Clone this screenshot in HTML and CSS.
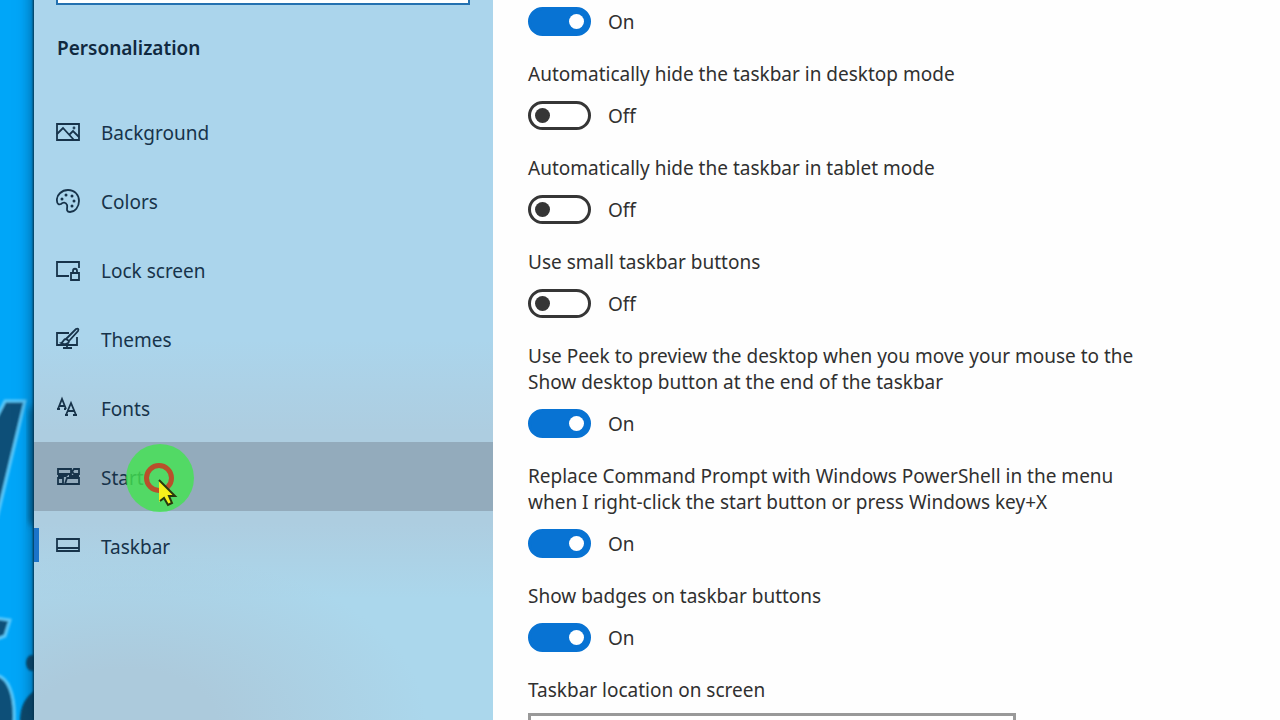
FILE: index.html
```html
<!DOCTYPE html>
<html lang="en">
<head>
    <meta charset="UTF-8">
    <meta name="viewport" content="width=device-width, initial-scale=1.0">
    <title>Settings</title>
    <link rel="stylesheet" href="styles.css">
</head>
<body>
    <div class="desktop">
        <svg class="wallpaper" viewBox="0 0 34 720" preserveAspectRatio="xMinYMin slice" aria-hidden="true">
            <defs>
                <filter id="soft" x="-50%" y="-50%" width="200%" height="200%">
                    <feGaussianBlur stdDeviation="1"/>
                </filter>
                <filter id="shade" x="-100%" y="-50%" width="300%" height="200%">
                    <feGaussianBlur stdDeviation="3"/>
                </filter>
            </defs>
            <path d="M34 402L30 412V522L34 528Z" fill="#04405f" filter="url(#shade)"/>
            <g filter="url(#soft)" fill="#075078" stroke="#5cc9fb" stroke-width="3">
                <path d="M5 401H25L-3 518H-10V430Z"/>
                <path d="M-5 618L10 620L5 636L-5 640Z"/>
                <path d="M-5 675C8 676 16 694 14 725H-5Z"/>
            </g>
            <g filter="url(#soft)" fill="#074667">
                <ellipse cx="32" cy="663" rx="6" ry="8"/>
                <path d="M40 688C26 694 19 706 20 725H40Z"/>
            </g>
        </svg>
        <div class="window">
            <aside class="sidebar">
                <input type="search" class="search" aria-label="Find a setting">
                <h2>Personalization</h2>
                <nav>
                    <a href="#background" class="nav-item">
                        <svg class="icon" viewBox="0 0 24 24">
                            <path d="M1 4H23V20H1Z"/>
                            <path d="M1 14L7 8L18 20M13 15L17 11L23 17"/>
                            <circle cx="18" cy="8" r=".5"/>
                        </svg>
                        <span>Background</span>
                    </a>
                    <a href="#colors" class="nav-item">
                        <svg class="icon" viewBox="0 0 24 24">
                            <path d="M1 12C0 6 6 1 12 1C19 1 23 6 23 12C23 18 19 23 14 23C9 23 12 18 11 16C10 13 7 13 5 15C3 16 1 15 1 12Z"/>
                            <g class="dots">
                                <circle cx="6" cy="10" r="1.5"/>
                                <circle cx="10" cy="6" r="1.5"/>
                                <circle cx="16" cy="7" r="1.5"/>
                                <circle cx="18" cy="12" r="1.5"/>
                                <circle cx="16" cy="17" r="1.5"/>
                            </g>
                        </svg>
                        <span>Colors</span>
                    </a>
                    <a href="#lockscreen" class="nav-item">
                        <svg class="icon" viewBox="0 0 24 24">
                            <path d="M13 18H1V4H23V10"/>
                            <path d="M15 15H23V22H15ZM17 15V13C17 10 21 10 21 13V15"/>
                        </svg>
                        <span>Lock screen</span>
                    </a>
                    <a href="#themes" class="nav-item">
                        <svg class="icon" viewBox="0 0 24 24">
                            <path d="M13 6H1V18H21V10M11 18V21M7 21H16"/>
                            <path d="M10 12L20 2C22 1 23 2 22 4L13 14M10 12C7 12 8 15 5 16C8 18 13 17 13 14ZM10 12L13 14"/>
                        </svg>
                        <span>Themes</span>
                    </a>
                    <a href="#fonts" class="nav-item">
                        <svg class="icon" viewBox="0 0 24 24">
                            <path d="M2 13L6 3L10 13M3 10H9M1 13H4M8 13H10"/>
                            <path d="M10 19L15 7L20 19M12 15H18M9 19H12M17 19H21"/>
                        </svg>
                        <span>Fonts</span>
                    </a>
                    <a href="#start" class="nav-item hover">
                        <svg class="icon" viewBox="0 0 24 24">
                            <path d="M2 4H15V9H2ZM18 4H23V9H18L16 7ZM2 13H7V19H2ZM11 13H23V19H9ZM2 11H10L12 9M13 11H23"/>
                        </svg>
                        <span>Start</span>
                        <svg class="pointer" viewBox="0 0 68 68" aria-hidden="true">
                            <circle cx="34" cy="34" r="34" fill="#42e54f" fill-opacity=".8"/>
                            <circle cx="33" cy="34" r="12.500" fill="none" stroke="#b9502b" stroke-width="5"/>
                            <path d="M33 36V58L38 53L43 61L47 59L43 51H49Z" fill="#f6f01c"/>
                            <path d="M33 36L49 52H43L46 59L42 61L38 54L34 57" fill="none" stroke="#27380f" stroke-width="2"/>
                        </svg>
                    </a>
                    <a href="#taskbar" class="nav-item active">
                        <svg class="icon" viewBox="0 0 24 24">
                            <path d="M1 5H23V17H1ZM1 14H23"/>
                        </svg>
                        <span>Taskbar</span>
                    </a>
                </nav>
            </aside>
            <main class="content">
                <div class="setting">
                    <div class="toggle-row">
                        <input type="checkbox" class="toggle" id="lockTaskbar" aria-label="Lock the taskbar" checked>
                        <span>On</span>
                    </div>
                </div>
                <div class="setting">
                    <label for="hideDesktop">Automatically hide the taskbar in desktop mode</label>
                    <div class="toggle-row">
                        <input type="checkbox" class="toggle" id="hideDesktop">
                        <span>Off</span>
                    </div>
                </div>
                <div class="setting">
                    <label for="hideTablet">Automatically hide the taskbar in tablet mode</label>
                    <div class="toggle-row">
                        <input type="checkbox" class="toggle" id="hideTablet">
                        <span>Off</span>
                    </div>
                </div>
                <div class="setting">
                    <label for="smallButtons">Use small taskbar buttons</label>
                    <div class="toggle-row">
                        <input type="checkbox" class="toggle" id="smallButtons">
                        <span>Off</span>
                    </div>
                </div>
                <div class="setting">
                    <label for="peek">Use Peek to preview the desktop when you move your mouse to the Show desktop button at the end of the taskbar</label>
                    <div class="toggle-row">
                        <input type="checkbox" class="toggle" id="peek" checked>
                        <span>On</span>
                    </div>
                </div>
                <div class="setting">
                    <label for="powershell">Replace Command Prompt with Windows PowerShell in the menu when I right-click the start button or press Windows key+X</label>
                    <div class="toggle-row">
                        <input type="checkbox" class="toggle" id="powershell" checked>
                        <span>On</span>
                    </div>
                </div>
                <div class="setting">
                    <label for="badges">Show badges on taskbar buttons</label>
                    <div class="toggle-row">
                        <input type="checkbox" class="toggle" id="badges" checked>
                        <span>On</span>
                    </div>
                </div>
                <div class="setting select-setting">
                    <label for="location">Taskbar location on screen</label>
                    <select id="location">
                        <option>Bottom</option>
                        <option>Left</option>
                        <option>Right</option>
                        <option>Top</option>
                    </select>
                </div>
            </main>
        </div>
    </div>
</body>
</html>
```

FILE: styles.css
```css
:root {
    --accent: #0873d3;
    --text: #303030;
    --nav-text: #17334a;
}

* {
    box-sizing: border-box;
}

body {
    margin: 0;
    color: var(--text);
    font-family: "Noto Sans", "Open Sans", sans-serif;
    font-size: 19px;
    line-height: 26px;
}

.desktop {
    display: flex;
    height: 100vh;
    overflow: hidden;
    background: #00a6f8;
}

.wallpaper {
    flex: none;
    width: 34px;
    height: 100vh;
}

/* The window hangs over the top edge of the screen */
.window {
    display: flex;
    flex: 1;
    min-width: 0;
    margin-top: -40px;
    background: #fefefe;
    box-shadow: -1px 0 2px #05324d, -2px 0 14px rgba(0, 50, 90, 0.6);
}

/* Sidebar */
.sidebar {
    flex: none;
    width: 459px;
    background:
        radial-gradient(ellipse 300px 170px at 20% 100%, #accadc 30%, rgba(172, 202, 220, 0)),
        linear-gradient(#abd5ec 50%, #adcde0 62%, #adcde0 74%, #abd7ec 84%);
}

.search {
    display: block;
    width: 414px;
    height: 45px;
    margin-left: 22px;
    padding: 0 10px;
    border: 2px solid #2471b0;
    background: white;
    font: inherit;
}

.sidebar h2 {
    margin: 30px 0 36px 23px;
    color: #10293f;
    font-size: 19px;
    font-weight: 600;
}

.nav-item {
    position: relative;
    display: flex;
    align-items: center;
    gap: 21px;
    height: 69px;
    padding-left: 22px;
    color: var(--nav-text);
    text-decoration: none;
}

.nav-item span,
.toggle-row span {
    padding-top: 2px;
}

.nav-item.hover {
    background: rgba(100, 110, 120, 0.35);
}

.nav-item.active::before {
    content: "";
    position: absolute;
    top: 17px;
    left: 0;
    width: 5px;
    height: 34px;
    background: #1b73c9;
}

.icon {
    width: 24px;
    height: 24px;
    fill: none;
    stroke: var(--nav-text);
    stroke-width: 1.8px;
}

.icon .dots {
    fill: var(--nav-text);
    stroke: none;
}

.pointer {
    position: absolute;
    top: 2px;
    left: 92px;
    width: 68px;
    height: 68px;
}

/* Settings */
.content {
    flex: 1;
    min-width: 0;
    padding: 46px 35px 0;
}

.setting {
    display: flex;
    flex-direction: column;
    gap: 13px;
    max-width: 620px;
    margin-bottom: 25px;
}

.toggle-row {
    display: flex;
    align-items: center;
    gap: 17px;
    height: 30px;
}

.toggle {
    appearance: none;
    flex: none;
    display: flex;
    align-items: center;
    width: 63px;
    height: 29px;
    margin: 0;
    padding: 0 4px;
    border: 3px solid #363636;
    border-radius: 15px;
    background: white;
}

.toggle::before {
    content: "";
    width: 15px;
    height: 15px;
    border-radius: 50%;
    background: #363636;
}

.toggle:checked {
    justify-content: flex-end;
    border-color: var(--accent);
    background: var(--accent);
}

.toggle:checked::before {
    background: white;
}

.select-setting {
    gap: 10px;
}

.select-setting select {
    appearance: none;
    width: 488px;
    height: 48px;
    padding: 0 14px;
    border: 3px solid #999;
    border-radius: 0;
    background: white;
    color: var(--text);
    font: inherit;
}
```
